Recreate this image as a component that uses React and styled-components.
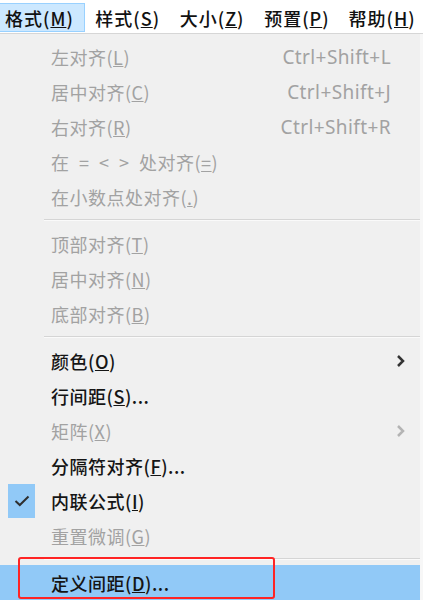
import React from 'react';
import styled, { createGlobalStyle } from 'styled-components';

const GlobalStyle = createGlobalStyle`
  body {
    margin: 0;
    background: #ffffff;
    font-family: "Noto Sans CJK SC", "Noto Sans", sans-serif;
  }
`;

const Page = styled.div`
  width: 423px;
  height: 600px;
  overflow: hidden;
  background: #ffffff;
`;

const MenuBar = styled.div`
  display: flex;
  height: 33px;
  background: #ffffff;
  border-bottom: 1px solid #d6d6d6;
`;

const BarItem = styled.div`
  box-sizing: border-box;
  width: ${p => (p.$first ? 87 : 86)}px;
  padding-left: ${p => (p.$first ? 5 : 10)}px;
  margin-top: 3px;
  height: 29px;
  display: flex;
  align-items: center;
  font-size: 18px;
  font-weight: 500;
  letter-spacing: 1px;
  color: #111;
  white-space: nowrap;
  background: ${p => (p.$active ? '#cce8ff' : 'transparent')};
  border: 1px solid ${p => (p.$active ? '#99d1ff' : 'transparent')};
  border-left: none;
`;

const Dropdown = styled.div`
  background: #f0f0f0;
  padding-top: 5px;
  height: 600px;
  border-right: 3px solid #f7f7f7;
`;

const Row = styled.div`
  position: relative;
  display: grid;
  grid-template-columns: 44px 1fr auto 29px;
  align-items: center;
  height: 35px;
  font-size: 18px;
  font-weight: ${p => (p.$disabled ? 400 : 500)};
  color: ${p => (p.$disabled ? '#a2a2a2' : '#151515')};
  background: ${p => (p.$hover ? '#91c9f7' : 'transparent')};
`;

const Gutter = styled.div`
  height: 100%;
  display: flex;
  align-items: center;
`;

const CheckBox = styled.div`
  margin-left: 8px;
  width: 27px;
  height: 34px;
  background: #91c9f7;
  display: flex;
  align-items: center;
  justify-content: center;
`;

const Label = styled.span`
  padding-left: 7px;
  white-space: pre;
  letter-spacing: 0.5px;
`;

const Shortcut = styled.span`
  font-family: "Noto Sans", sans-serif;
  font-weight: 400;
  font-size: 19px;
  letter-spacing: 0.4px;
  white-space: nowrap;
`;

const Arrow = styled.div`
  display: flex;
  align-items: center;
  padding-left: 5px;
`;

const Separator = styled.div`
  margin: 5px 0 5px 44px;
  border-top: 1px solid #d5d5d5;
  border-bottom: 1px solid #fafafa;
`;

// red annotation frame drawn over the highlighted item
const Annotation = styled.div`
  position: absolute;
  left: 18px;
  top: -8px;
  width: 257px;
  height: 42px;
  box-sizing: border-box;
  border: 2.5px solid #ff2424;
  border-radius: 3px;
  pointer-events: none;
`;

const Key = ({ k }) => (
  <>
    (<u>{k}</u>)
  </>
);

const Chevron = ({ disabled }) => (
  <svg width="10" height="14" viewBox="0 0 10 14">
    <path
      d="M2 2 L7 7 L2 12"
      fill="none"
      stroke={disabled ? '#b4b4b4' : '#333333'}
      strokeWidth="2.5"
    />
  </svg>
);

const Check = () => (
  <svg width="16" height="12" viewBox="0 0 16 12">
    <path d="M1.5 6 L5.8 10 L14.5 1.5" fill="none" stroke="#2f2f2f" strokeWidth="2" />
  </svg>
);

const groups = [
  [
    { text: '左对齐', k: 'L', short: 'Ctrl+Shift+L', disabled: true },
    { text: '居中对齐', k: 'C', short: 'Ctrl+Shift+J', disabled: true },
    { text: '右对齐', k: 'R', short: 'Ctrl+Shift+R', disabled: true },
    { text: '在\u2002=\u2002<\u2002>\u2002处对齐', k: '=', disabled: true },
    { text: '在小数点处对齐', k: '.', disabled: true },
  ],
  [
    { text: '顶部对齐', k: 'T', disabled: true },
    { text: '居中对齐', k: 'N', disabled: true },
    { text: '底部对齐', k: 'B', disabled: true },
  ],
  [
    { text: '颜色', k: 'O', sub: true },
    { text: '行间距', k: 'S', dots: true },
    { text: '矩阵', k: 'X', sub: true, disabled: true },
    { text: '分隔符对齐', k: 'F', dots: true },
    { text: '内联公式', k: 'I', checked: true },
    { text: '重置微调', k: 'G', disabled: true },
  ],
  [{ text: '定义间距', k: 'D', dots: true, hover: true, marked: true }],
];

const barItems = [
  ['格式', 'M'],
  ['样式', 'S'],
  ['大小', 'Z'],
  ['预置', 'P'],
  ['帮助', 'H'],
];

export default function App() {
  return (
    <Page>
      <GlobalStyle />
      <MenuBar>
        {barItems.map(([t, k], i) => (
          <BarItem key={k} $first={i === 0} $active={i === 0}>
            {t}
            <Key k={k} />
          </BarItem>
        ))}
      </MenuBar>
      <Dropdown>
        {groups.map((items, gi) => (
          <React.Fragment key={gi}>
            {gi > 0 && <Separator />}
            {items.map((it, i) => (
              <Row key={i} $disabled={it.disabled} $hover={it.hover}>
                <Gutter>
                  {it.checked && (
                    <CheckBox>
                      <Check />
                    </CheckBox>
                  )}
                </Gutter>
                <Label>
                  {it.text}
                  <Key k={it.k} />
                  {it.dots && '...'}
                </Label>
                <Shortcut>{it.short}</Shortcut>
                <Arrow>{it.sub && <Chevron disabled={it.disabled} />}</Arrow>
                {it.marked && <Annotation />}
              </Row>
            ))}
          </React.Fragment>
        ))}
      </Dropdown>
    </Page>
  );
}
